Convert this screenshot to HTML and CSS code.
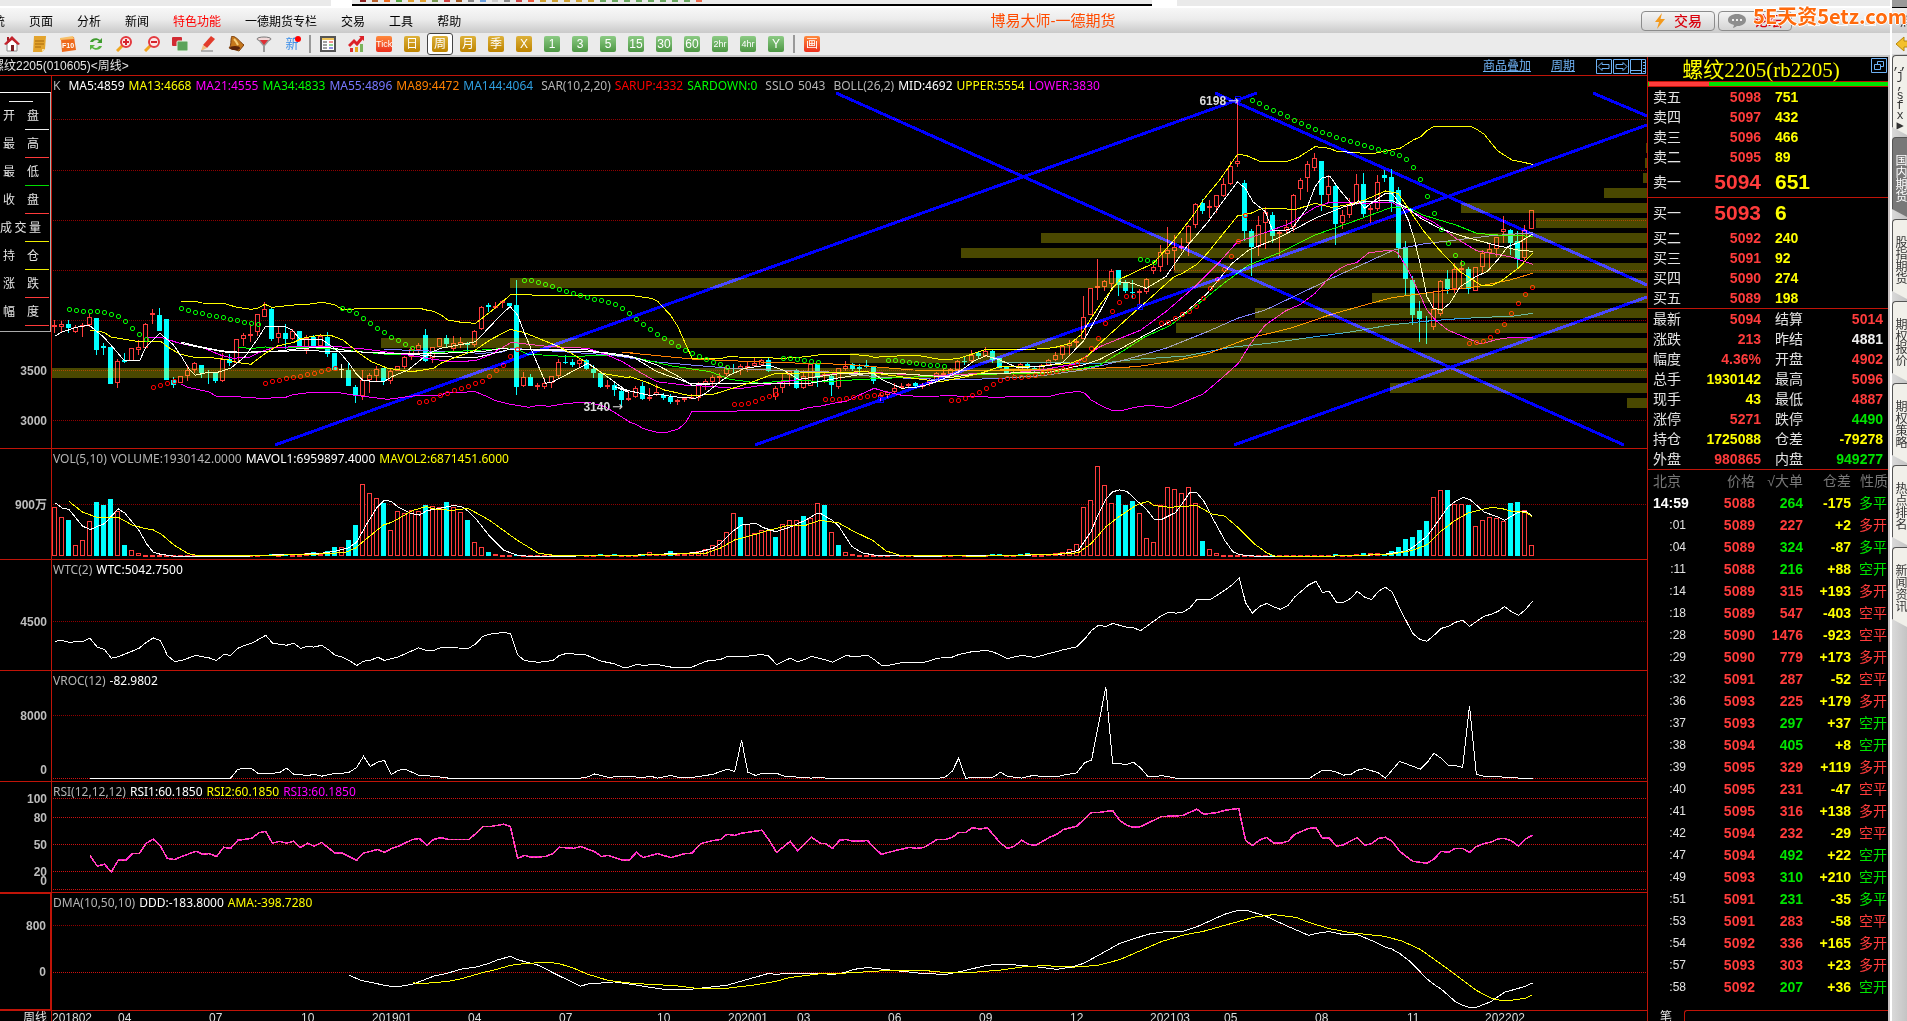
FILE: index.html
```html
<!DOCTYPE html>
<html lang="zh-CN">
<head>
<meta charset="utf-8">
<title>博易大师-一德期货</title>
<link rel="stylesheet" href="styles.css">
</head>
<body>
<div class="app">
  <div class="window">
    <div class="backdrop">
      <div class="backdrop-left"></div>
      <div class="backdrop-peek" id="peek"></div>
      <div class="backdrop-right"></div>
    </div>
    <header class="menubar">
      <nav class="menu">
        <a href="#">系统</a><a href="#">页面</a><a href="#">分析</a><a href="#">新闻</a><a href="#" class="hot">特色功能</a><a href="#">一德期货专栏</a><a href="#">交易</a><a href="#">工具</a><a href="#">帮助</a>
      </nav>
      <h1 class="app-title">博易大师-一德期货</h1>
      <div class="menu-actions">
        <button class="pill"><svg width="12" height="16" viewBox="0 0 12 16"><path d="M8 0 1 9h4L3 16l8-10H6.500z" fill="#f39a1d"/></svg>交易</button>
        <button class="pill"><svg width="18" height="14" viewBox="0 0 18 14"><path d="M9 0c5 0 9 2.500 9 6s-4 6-8 6c-2 0-2 1-5 2l1-3C3 10 0 9 0 6c0-3.500 4-6 9-6z" fill="#8d8d8d"/><path d="M4 5h2v2H4zM8 5h2v2H8zM12 5h2v2h-2z" fill="#eee"/></svg>论坛</button>
      </div>
      <div class="win-buttons"><span></span><span></span><span></span></div>
    </header>

    <div class="toolbar">
      <button class="tool" aria-label="首页"><svg viewBox="0 0 16 16"><path d="M3 8v7h10V8L8 3z" fill="#fff" stroke="#888"/><path d="M8 0 0 8l2 1 6-5 6 5 2-1z" fill="#c4232c"/><path d="M3 1h2v3L3 5z" fill="#a51c25"/><path d="M7 9h3v6H7z" fill="#7c1f22"/></svg></button>
      <button class="tool" aria-label="便笺"><svg viewBox="0 0 16 16"><path d="M2 0h12l-1 13-3 3H1z" fill="#e3a42d"/><path d="M3 5h9M3 8h9M3 11h6" stroke="#a8680e"/><path d="M10 16v-3h3z" fill="#fce09a"/></svg></button>
      <button class="tool" aria-label="F10"><svg viewBox="0 0 16 16"><path d="M1 3 14 1l2 13-14 2z" fill="#ee6a1c"/><path d="M0 2 13 0l1 3L0 4z" fill="#f6c06a"/><text x="8" y="12" text-anchor="middle" class="icon-f10">F10</text></svg></button>
      <button class="tool" aria-label="刷新"><svg viewBox="0 0 16 16"><path d="M2 6c1-4 7-5 10-2l2-2v5H9l2-2C9 3 6 4 5 6z" fill="#3f9b2e"/><path d="M14 10c-1 4-7 5-10 2l-2 2V9h5l-2 2c2 2 5 1 6-1z" fill="#57b440"/></svg></button>
      <button class="tool" aria-label="放大"><svg viewBox="0 0 16 16"><path d="m1 15 6-6" stroke="#f0a51e" stroke-width="3"/><circle cx="10" cy="6" r="5" fill="#fbe9ea" stroke="#e43a3f" stroke-width="2"/><path d="M10 3v6M7 6h6" stroke="#d5232c" stroke-width="2"/></svg></button>
      <button class="tool" aria-label="缩小"><svg viewBox="0 0 16 16"><path d="m1 15 6-6" stroke="#f0a51e" stroke-width="3"/><circle cx="10" cy="6" r="5" fill="#fbe9ea" stroke="#e43a3f" stroke-width="2"/><path d="M7 6h6" stroke="#d5232c" stroke-width="2"/></svg></button>
      <button class="tool" aria-label="叠加"><svg viewBox="0 0 16 16"><rect x="0" y="1" width="10" height="9" rx="1" fill="#d22b33"/><rect x="5" y="5" width="11" height="10" rx="1" fill="#5ba35a" stroke="#e8f3e6"/></svg></button>
      <button class="tool" aria-label="画线"><svg viewBox="0 0 16 16"><path d="m3 9 8-9 4 3-8 9z" fill="#e23b2b"/><path d="m3 9-2 6 6-3z" fill="#f0c080"/><path d="M1 15h12" stroke="#777"/></svg></button>
      <button class="tool" aria-label="预警"><svg viewBox="0 0 16 16"><path d="M4 0c5 1 7 5 12 9l-5 6-10-3C4 9 2 4 4 0z" fill="#c5781d" stroke="#7a3d0c"/><ellipse cx="7" cy="12" rx="5" ry="2" fill="#5b250c"/><path d="M6 3c2 2 3 4 4 6" stroke="#f7ce78" stroke-width="2" fill="none"/></svg></button>
      <button class="tool" aria-label="筛选"><svg viewBox="0 0 16 16"><ellipse cx="8" cy="3" rx="7" ry="2" fill="#f3d9d9" stroke="#777"/><path d="m2 4 5 6v6h2v-6l5-6z" fill="#999"/><path d="m4 4 4 5 4-5z" fill="#de2f35"/></svg></button>
      <button class="tool news">新</button>
      <span class="sep"></span>
      <button class="tool" aria-label="报价"><svg viewBox="0 0 16 16"><path d="M1 1h14v14H1z" fill="#fff" stroke="#555" stroke-width="2"/><path d="M2 3h12" stroke="#eec45a" stroke-width="2"/><path d="M3 6h4M3 9h4M3 12h4" stroke="#444"/><path d="M9 6h4" stroke="#d22"/><path d="M9 9h4" stroke="#2a2"/><path d="M9 12h4" stroke="#22c"/></svg></button>
      <button class="tool" aria-label="走势"><svg viewBox="0 0 16 16"><path d="M2 12h3v4H2z" fill="#d33"/><path d="M7 11h3v5H7z" fill="#e6a91c"/><path d="M12 8h3v8h-3z" fill="#7ab45c"/><path d="m1 10 5-5 3 3 5-6" fill="none" stroke="#dc2127" stroke-width="3"/><path d="M11 0h5v5z" fill="#dc2127"/></svg></button>
      <button class="tool"><span class="chip red narrow">Tick</span></button>
      <button class="tool"><span class="chip gold">日</span></button>
      <button class="tool active"><span class="chip gold">周</span></button>
      <button class="tool"><span class="chip gold">月</span></button>
      <button class="tool"><span class="chip gold">季</span></button>
      <button class="tool"><span class="chip gold">X</span></button>
      <button class="tool"><span class="chip green">1</span></button>
      <button class="tool"><span class="chip green">3</span></button>
      <button class="tool"><span class="chip green">5</span></button>
      <button class="tool"><span class="chip green">15</span></button>
      <button class="tool"><span class="chip green">30</span></button>
      <button class="tool"><span class="chip green">60</span></button>
      <button class="tool"><span class="chip green narrow">2hr</span></button>
      <button class="tool"><span class="chip green narrow">4hr</span></button>
      <button class="tool"><span class="chip green">Y</span></button>
      <span class="sep"></span>
      <button class="tool"><span class="chip red">画</span></button>
    </div>

    <div class="workspace">
      <main class="charts">
        <div class="chart-head">
          <h2>螺纹2205(010605)&lt;周线&gt;</h2>
          <a href="#" class="overlay-link">商品叠加</a>
          <a href="#" class="period-link">周期</a>
          <div class="head-icons">
            <button aria-label="向左"><svg viewBox="0 0 16 15"><path d="M.5.500h15v14H.500z"/><path d="M2 7.500 6 3.500v2h7v4H6v2z"/></svg></button>
            <button aria-label="向右"><svg viewBox="0 0 16 15"><path d="M.5.500h15v14H.500z"/><path d="m14 7.500-4-4v2H3v4h7v2z"/></svg></button>
            <button aria-label="分栏"><svg viewBox="0 0 16 15"><path d="M.5.500h15v14H.500zM11.500 1v13M1 11.500h10"/><path d="M13 3.500h2M13 6.500h2M13 9.500h2M13 12.500h2"/></svg></button>
          </div>
        </div>

        <section class="panel" data-panel="main">
          <div class="axis">
            <div class="databox">
              <i class="val first"></i>
              <div><span>开</span><span>盘</span></div><i class="val w"></i>
              <div><span>最</span><span>高</span></div><i class="val r"></i>
              <div><span>最</span><span>低</span></div><i class="val g"></i>
              <div><span>收</span><span>盘</span></div><i class="val r"></i>
              <div class="wide"><span>成</span><span>交</span><span>量</span></div><i class="val y"></i>
              <div><span>持</span><span>仓</span></div><i class="val y"></i>
              <div><span>涨</span><span>跌</span></div><i class="val r"></i>
              <div><span>幅</span><span>度</span></div><i class="val r"></i>
            </div>
          </div>
          <div class="plot">
            <p class="legend"><span class="k">K</span><b class="white">MA5:4859</b><b class="yellow">MA13:4668</b><b class="magenta">MA21:4555</b><b class="lime">MA34:4833</b><b class="violet">MA55:4896</b><b class="orange">MA89:4472</b><b class="sky">MA144:4064</b><span class="group">SAR(10,2,20)</span><b class="red">SARUP:4332</b><b class="lime">SARDOWN:0</b><span class="group">SSLO</span><span>5043</span><span class="group">BOLL(26,2)</span><b class="white">MID:4692</b><b class="yellow">UPPER:5554</b><b class="magenta">LOWER:3830</b></p>
          </div>
        </section>
        <section class="panel" data-panel="vol">
          <div class="axis"></div>
          <div class="plot"><p class="legend"><span>VOL(5,10)</span><span>VOLUME:1930142.0000</span><b class="white">MAVOL1:6959897.4000</b><b class="yellow">MAVOL2:6871451.6000</b></p></div>
        </section>
        <section class="panel" data-panel="wtc">
          <div class="axis"></div>
          <div class="plot"><p class="legend"><span>WTC(2)</span><b class="white">WTC:5042.7500</b></p></div>
        </section>
        <section class="panel" data-panel="vroc">
          <div class="axis"></div>
          <div class="plot"><p class="legend"><span>VROC(12)</span><b class="white">-82.9802</b></p></div>
        </section>
        <section class="panel" data-panel="rsi">
          <div class="axis"></div>
          <div class="plot"><p class="legend"><span>RSI(12,12,12)</span><b class="white">RSI1:60.1850</b><b class="yellow">RSI2:60.1850</b><b class="magenta">RSI3:60.1850</b></p></div>
        </section>
        <section class="panel selected" data-panel="dma">
          <div class="axis"></div>
          <div class="plot"><p class="legend"><span>DMA(10,50,10)</span><b class="white">DDD:-183.8000</b><b class="yellow">AMA:-398.7280</b></p></div>
        </section>
        <div class="dates"><span class="dates-period">周线</span><div class="dates-track" id="dates"></div></div>
      </main>

      <aside class="quote">
        <div class="quote-title">
          <h2>螺纹2205(rb2205)</h2>
          <button aria-label="还原"><svg viewBox="0 0 16 15"><path d="M.5.500h15v14H.500zM6.500 6V3.500h6v5H10M3.500 6.500h6v5h-6z"/></svg></button>
        </div>
        <div class="ratio"><span></span></div>
        <table class="book" id="asks"></table>
        <table class="book" id="bids"></table>
        <table class="stats" id="stats"></table>
        <table class="ticks">
          <thead><tr><th class="t">北京</th><th>价格</th><th>√大单</th><th>仓差</th><th>性质</th></tr></thead>
          <tbody id="ticks"></tbody>
        </table>
        <div class="quote-tabs"><button>笔</button><div class="quote-tabs-rest"></div></div>
      </aside>
    </div>
  </div>

  <aside class="side">
    <div class="side-top"></div>
    <div class="side-menu">点</div>
    <div class="side-arrow"><svg width="14" height="16" viewBox="0 0 14 16"><path d="m1 8 8-7v4h5v6H9v4z" fill="#f3c02c" stroke="#b8860b"/></svg></div>
    <nav class="side-tabs">
      <button class="small"><span>,,</span><span>j</span><span>,</span><span>s</span><span>f</span><span>x</span><span>▶</span></button>
      <button class="on">国内期货</button>
      <button>股指期货</button>
      <button>期权报价</button>
      <button>期权策略</button>
      <button>热点排名</button>
      <button>新闻资讯</button>
    </nav>
  </aside>
  <div class="watermark">5E天资5etz.com</div>
</div>
<script src="script.js"></script>
</body>
</html>
```
FILE: styles.css
```css
* { box-sizing: border-box; }
body {
  margin: 0;
  background: #000;
  color: #e4e4e4;
  font: 12px/16px "Liberation Sans", "Noto Sans CJK SC", sans-serif;
}
h1, h2, p { margin: 0; font-weight: normal; }
button { border: 0; padding: 0; background: none; color: inherit; font: inherit; }
a { color: inherit; text-decoration: none; }
table { border-collapse: separate; border-spacing: 0; table-layout: fixed; width: 100%; }
td, th { padding: 0; font-weight: normal; white-space: nowrap; }

.app { position: relative; display: flex; height: 100vh; min-height: 800px; overflow: hidden; }
.window { flex: 1; min-width: 0; display: flex; flex-direction: column; border-right: 2px solid #fff; box-sizing: content-box; }

/* strip of the window behind */
.backdrop { display: flex; flex: none; height: 8px; background: #fff; border-bottom: 2px solid #fff; }
.backdrop-left { width: 331px; background: #eaeaea; margin-right: 21px; }
.backdrop-peek { flex: 0 0 800px; display: flex; gap: 6px; padding-left: 8px; background: #ebebeb; border-bottom: 2px solid #000; height: 6px; }
.backdrop-peek i { width: 6px; height: 2px; }
.backdrop-right { flex: 1; margin-left: 25px; background: #eaeaea; }

.menubar {
  display: grid;
  flex: none;
  grid-template-columns: 1fr auto 1fr;
  align-items: center;
  height: 25px;
  background: linear-gradient(#f7f7f7, #ececec 45%, #c9c9c9);
  color: #000;
  overflow: hidden;
}
.menu { display: flex; gap: 24px; margin-left: -19px; padding-top: 2px; white-space: nowrap; }
.hot { color: #f00; }
.app-title { font-size: 15px; color: #ff4a00; padding-left: 216px; }
.menu-actions { display: flex; gap: 3px; justify-content: flex-end; padding-right: 98px; grid-column: 3; grid-row: 1; }
.pill {
  display: flex; align-items: center; justify-content: center; gap: 8px;
  width: 74px; height: 20px;
  border: 1px solid #8c8c8c; border-radius: 4px;
  background: linear-gradient(#f4f4f4, #d4d4d4);
  color: #d8000c; font-size: 14px; font-weight: 500;
}
.win-buttons { display: flex; gap: 16px; justify-content: flex-end; padding-right: 14px; grid-column: 3; grid-row: 1; }
.win-buttons span { width: 12px; height: 10px; border: 1px solid #fafafa; }

.toolbar {
  display: flex; align-items: center;
  height: 24px;
  border-bottom: 2px solid #c8c8c8; background: #ebebeb;
  margin-left: -2px; overflow: hidden; flex: none;
}
.tool { flex: none; width: 28px; height: 22px; display: flex; align-items: center; justify-content: center; position: relative; }
.tool svg { width: 16px; height: 16px; }
.icon-f10 { font: bold 7px "Liberation Sans", sans-serif; fill: #fff; }
.news { color: #3b8ee8; font-size: 13px; }
.news::after { content: ""; position: absolute; right: 5px; top: 3px; width: 6px; height: 6px; border-radius: 50%; background: #f00; }
.sep { flex: none; width: 2px; height: 18px; margin: 0 3px; background: #999; }
.tool.active { border: 1px solid #444; border-radius: 3px; background: #fff; width: 26px; margin: 0 1px; }
.chip { width: 16px; height: 16px; border-radius: 2px; color: #fff; line-height: 16px; text-align: center; }
.gold { background: linear-gradient(#ddb13a, #be8400); }
.green { background: linear-gradient(#8ccb84, #4d9744); }
.red { background: linear-gradient(#ff8a3c, #ec2f1e); }
.narrow { font-family: "Liberation Sans Narrow", "Liberation Sans", sans-serif; font-size: 9px; }

.workspace { flex: 1; min-height: 0; display: grid; grid-template-columns: minmax(0, 1fr) 243px; background: #000; overflow: hidden; }

/* chart column */
.charts {
  display: grid; min-height: 0;
  grid-template-rows: 19px minmax(0, 373fr) repeat(4, minmax(0, 111fr)) minmax(0, 118fr) 10px;
}
.chart-head { display: flex; align-items: center; border-bottom: 1px solid #c01408; overflow: hidden; }
.chart-head h2 { flex: 1; font-size: 12px; margin-left: -8px; white-space: nowrap; }
.chart-head a { color: #6fb2f5; text-decoration: underline; }
.overlay-link { margin-right: 20px; }
.period-link { margin-right: 21px; }
.head-icons { display: flex; gap: 1px; padding-right: 1px; }
.head-icons svg, .quote-title svg { display: block; width: 16px; height: 15px; fill: none; stroke: #6fb2f5; }

.panel { display: grid; grid-template-columns: 51px minmax(0, 1fr); border-bottom: 1px solid #c01408; min-height: 0; }
.axis { position: relative; }
.axis .tick { position: absolute; right: 4px; margin-top: -8px; color: #bdbdbd; font-weight: bold; }
.selected .axis { border: solid #c01408; border-width: 1px 1px 1px 0; }
.plot { position: relative; min-height: 0; border-left: 1px solid #c01408; }
.plot svg { position: absolute; left: 0; top: 0; width: 100%; height: 100%; display: block; }
.plot svg * { vector-effect: non-scaling-stroke; }
.legend {
  position: relative; z-index: 1;
  display: flex; gap: 4px; padding: 2px 0 0 1px;
  font-family: "Noto Sans", "DejaVu Sans Condensed", sans-serif;
  color: #b4b4b4; white-space: nowrap;
}
.legend b { font-weight: normal; }
.legend .k { margin-right: 4px; }
.legend .group { margin-left: 4px; }
.white { color: #fff; } .yellow { color: #ff0; } .magenta { color: #f0f; } .lime { color: #0f0; }
.violet { color: #7878ff; } .orange { color: #ff8000; } .sky { color: #2f9fe0; } .legend .red { color: #f00; background: none; }
.note { position: absolute; transform: translate(-100%, -50%); display: flex; align-items: center; gap: 2px; color: #ddd; font-weight: bold; white-space: nowrap; }
.note::after { content: "→"; font: 13px/16px "DejaVu Sans", sans-serif; }

.databox { margin-top: 16px; height: 240px; border-top: 1px solid #fff; border-right: 1px solid #aaa; border-bottom: 1px solid #aaa; display: flex; flex-direction: column; }
.databox div { display: flex; justify-content: space-between; width: 36px; margin-left: 3px; height: 27px; align-items: center; line-height: 12px; }
.databox div.wide { width: 41px; margin-left: 0; }
.val { flex: none; height: 1px; width: 24px; margin-left: 25px; background: #eee; }
.val.first { margin: 8px 0 0 9px; }
.val.r { background: #ff3a3a; } .val.g { background: #0d0; } .val.y { background: #ee0; }

.dates { display: grid; grid-template-columns: 51px minmax(0, 1fr); overflow: hidden; height: 10px; line-height: 14px; }
.dates-period { text-align: right; padding-right: 4px; }
.dates-track { position: relative; border-left: 1px solid #c01408; height: 14px; }
.dates-track span { position: absolute; top: 0; color: #ddd; }

/* quote column */
.quote { display: flex; flex-direction: column; min-height: 0; border-left: 1px solid #c01408; border-right: 2px solid #c8c0c0; font-size: 14px; }
.quote-title { position: relative; flex: none; height: 24px; text-align: center; }
.quote-title h2 { color: #ff0; font: 21px/26px "Liberation Serif", "Noto Sans CJK SC", serif; padding-right: 14px; }
.quote-title button { position: absolute; right: 1px; top: 1px; }
.ratio { flex: none; height: 6px; border: solid #c01408; border-width: 1px 0; background: #00e400; padding-left: 1px; }
.ratio span { display: block; width: 25%; height: 4px; background: #ff3c3c; }
.book, .stats { flex: none; border-bottom: 1px solid #c01408; }
.book tr, .stats tr { height: 20px; }
.book tr.best { height: 30px; }
.book th, .stats th { text-align: left; padding-left: 5px; width: 40px; line-height: 18px; }
.quote td { font-weight: bold; line-height: 18px; }
.book td:nth-child(2), .stats td:nth-child(2) { width: 73px; text-align: right; }
.book td:nth-child(3) { padding-left: 14px; }
.best td { font-size: 21px; }
.stats th:nth-child(3) { padding-left: 14px; width: 60px; }
.stats td:nth-child(4) { text-align: right; padding-right: 5px; }
.up { color: #ff3c3c; } .down { color: #00e400; } .amt { color: #ff0; } .flat { color: #f0f0f0; }
.ticks { flex: none; }
.ticks tr { height: 22px; }
.ticks th { color: #777; text-align: right; }
.ticks td { text-align: right; }
.ticks th.t { width: 40px; text-align: left; padding-left: 5px; }
.ticks th:nth-child(2) { width: 67px; }
.ticks th:nth-child(3), .ticks th:nth-child(4) { width: 48px; }
.ticks .sec { font-weight: normal; font-size: 12px; padding-right: 2px; }
.ticks .clock { text-align: left; padding-left: 5px; color: #fff; }
.ticks td:last-child { font-weight: normal; padding-right: 1px; }
.quote-tabs { margin-top: auto; flex: none; display: flex; height: 11px; overflow: hidden; font-size: 12px; }
.quote-tabs button { width: 36px; line-height: 14px; height: 14px; }
.quote-tabs-rest { flex: 1; height: 16px; border: solid #c01408; border-width: 1px 0 0 1px; border-top-left-radius: 3px; }

/* right tab strip */
.side { width: 15px; flex: none; background: linear-gradient(90deg, #d9d9d9, #c4c4c4); overflow: hidden; color: #222; }
.side-top { height: 8px; background: #999; border-bottom: 1px solid #000; }
.side-menu { height: 25px; padding: 6px 0 0 8px; background: linear-gradient(#f0f0f0, #c9c9c9); }
.side-arrow { height: 21px; padding: 3px 0 0 3px; background: #ebebeb; }
.side-tabs { display: flex; flex-direction: column; gap: 2px; padding-top: 1px; }
.side-tabs button {
  height: 80px; width: 15px;
  border-left: 1px solid #555; border-top: 1px solid #555; border-top-left-radius: 4px;
  background: #f1f0ea; color: #333;
  writing-mode: vertical-rl; line-height: 14px; text-align: center;
  clip-path: polygon(0 0, 100% 0, 100% 100%, 0 72px);
}
.side-tabs button.on { background: #787878; color: #fff; }
.side-tabs button.small { writing-mode: horizontal-tb; display: flex; flex-direction: column; justify-content: center; align-items: center; line-height: 10px; font-family: "Liberation Mono", monospace; }

.watermark {
  position: absolute; right: 0; top: 1px;
  color: #ff6a0c; font: bold 20px/30px "Noto Sans CJK SC", sans-serif;
  text-shadow: 1px 0 #fff, -1px 0 #fff, 0 1px #fff, 0 -1px #fff;
}
```
FILE: script.js
```js
const NS = 'http://www.w3.org/2000/svg';

// Unit systems of the stored series: origin and units per pixel on each axis.
const FRAMES = {
  A: [0, 2.45, 80, 3],
  B: [500, 2.6133, 240, 3],
  C: [1000, 2.4123, 80, 3],
  D: [0, 1.9122, 440, 2.7034],
  E: [820, 1.8892, 440, 2.7034]
};
const barX = i => 54.5 + 7 * i;

function series(parts) {
  const out = [];
  for (const [frame, text] of Object.entries(parts)) {
    const [x0, sx, y0, sy] = FRAMES[frame];
    const n = text.trim().split(/[\s,]+/).map(Number);
    for (let i = 0; i < n.length; i += 2) {
      out.push((x0 + n[i] / sx).toFixed(1) + ',' + (y0 + n[i + 1] / sy).toFixed(1));
    }
  }
  return out.join(' ');
}

function el(parent, name, attrs) {
  const node = document.createElementNS(NS, name);
  for (const key in attrs) node.setAttribute(key, attrs[key]);
  parent.appendChild(node);
  return node;
}

const RED = '#ff3c3c', CYAN = '#00ffff';
const PANELS = {
  main: { y: 76, h: 372, grid: [119.5, 170.5, 220.5, 270.5, 320.5, 370.5, 420.5], ticks: [['3500', 370.5], ['3000', 420.5]] },
  vol: { y: 449, h: 110, grid: [504.5], ticks: [['900万', 504.5]] },
  wtc: { y: 560, h: 110, grid: [621.5], ticks: [['4500', 621.5]] },
  vroc: { y: 671, h: 110, grid: [715.5], bright: [778.5], ticks: [['8000', 715.5], ['0', 769.5]] },
  rsi: { y: 782, h: 110, bright: [798.5, 817.5, 844.5, 871.5, 889.5], ticks: [['100', 798.5], ['80', 817.5], ['50', 844.5], ['20', 871.5], ['0', 880.5]] },
  dma: { y: 893, h: 117, grid: [925.5], bright: [972.5], ticks: [['800', 925.5], ['0', 972.5]] }
};

const svgs = {};
for (const [name, p] of Object.entries(PANELS)) {
  const root = document.querySelector(`[data-panel="${name}"]`);
  const plot = root.querySelector('.plot');
  const svg = el(plot, 'svg', { viewBox: `52 ${p.y} 1595 ${p.h}`, preserveAspectRatio: 'none', 'shape-rendering': 'crispEdges' });
  svgs[name] = svg;
  for (const [key, color] of [['grid', '#900000'], ['bright', '#d01010']]) {
    for (const y of p[key] || []) el(svg, 'path', { d: `M53 ${y}H1647`, stroke: color, 'stroke-dasharray': '1 1' });
  }
  for (const [text, y] of p.ticks) {
    const span = document.createElement('span');
    span.className = 'tick';
    span.textContent = text;
    span.style.top = ((y - p.y) / p.h * 100) + '%';
    root.querySelector('.axis').appendChild(span);
  }
}
const line = (panel, color, parts, extra) =>
  el(svgs[panel], 'polyline', { points: series(parts), fill: 'none', stroke: color, ...extra });

function box(svg, i, type, y1, y2) {
  const x = barX(i) - 2.5;
  if (type === 'C') el(svg, 'rect', { x, y: y1, width: 5, height: Math.max(1, y2 - y1), fill: CYAN });
  else el(svg, 'rect', { x: x + 0.5, y: y1 + 0.5, width: 4, height: Math.max(0.5, y2 - y1 - 1), fill: '#000', stroke: RED });
}

// Candles: type, body top, body bottom, high, low.
const CANDLES = `R735,740,720,760 R732,740,723,755 C732,745,720,758 R740,755,735,760 R735,740,730,770 R711,735,700,742 C714,810,714,825 C797,803,790,825 C801,912,801,912 R843,908,838,923 C841,846,820,850 R805,843,805,843 R802,809,780,825 R733,805,730,808 R700,706,687,733 C705,753,684,753 C717,900,717,900 C900,915,890,924 R889,910,889,910 R870,889,855,903 R850,870,845,880 C856,880,856,893 C876,880,870,911 C878,903,878,910 R838,902,820,905 C838,850,822,858 R778,850,778,850 R766,778,760,798 R762,768,732,787 R703,757,703,767
R688,710,667,712 C687,777,682,783 R759,775,741,789 C759,777,732,806 R754,777,748,780 C753,808,753,808 R775,810,765,822 C772,799,765,802 R769,799,765,803 C771,822,757,832 C819,870,819,870 W868,870,852,893 C870,917,849,917 C920,945,914,969 R900,947,870,960 R885,900,880,938 R867,887,857,903 C864,903,864,915 R873,903,868,912 R858,873,858,873 R832,860,829,866 R807,832,805,840 R795,810,789,825 C765,843,747,846 R800,835,800,850 R775,800,775,800 C773,792,765,803 R790,808,768,815 R786,795,770,805 C790,794,785,823
R753,795,750,800 R682,748,677,750 C676,682,670,695 R678,682,665,687 R664,669,660,685 C670,678,668,685 C675,920,600,945 R892,917,875,922 C890,918,882,918 R915,918,908,930 R908,922,893,927 R888,910,888,923 R845,888,838,893 C845,849,826,853 C846,854,838,860 R840,852,834,862 C840,867,837,870 C868,880,855,895 C878,920,875,925 R915,922,900,927 C915,930,910,947 C934,960,925,982 R955,960,930,963 R923,952,918,955 C917,957,906,960 R952,957,925,962 R937,945,912,948 C946,953,940,960 C952,966,942,973 R960,965,957,974
R954,959,950,966 R952,955,942,956 R914,954,907,962 R904,913,898,930 R892,905,885,920 R888,892,880,910 R865,883,855,888 C863,868,852,883 R859,868,852,886 R857,861,846,875 R850,858,835,861 R840,854,837,858 C840,873,832,875 R924,952,917,960 R902,925,882,938 R873,885,870,918 C870,924,867,927 R888,925,870,927 R852,917,852,917 C850,893,850,922 R882,888,878,910 C888,914,884,948 R865,922,863,927 R859,866,843,874 C853,867,850,873 C860,866,853,880 C855,861,840,863 C861,903,858,912 R945,955,938,963 R935,946,932,955
R925,935,910,940 R917,923,910,928 R911,917,908,921 C909,917,906,920 R915,918,910,928 R899,910,895,918 R880,900,877,905 R879,883,868,888 R867,882,863,885 R844,870,840,873 C842,845,832,855 R825,842,810,846 C819,829,814,838 R814,827,800,830 C813,841,810,850 C835,865,835,865 C860,883,860,883 R875,883,870,885 R852,872,848,876 C852,865,850,873 C865,868,860,877 R855,873,852,875 R840,855,838,858 R825,840,815,842 R799,825,797,837 R788,798,780,825 R782,786,775,800 R712,776,648,778 R625,706,625,706 R619,625,538,660
R603,620,600,634 R574,612,567,627 C570,615,570,648 C608,632,600,640 C636,640,600,656 R633,638,627,672 R598,635,594,641 R562,574,555,582 R517,562,495,575 R511,523,442,555 R502,512,465,570 R497,501,474,513 R439,490,435,528 R373,436,370,445 C370,393,358,402 R379,385,360,414 R346,382,346,398 R313,349,294,351 R259,313,244,316 R244,253,60,260 C309,453,300,484 C453,500,448,588 R436,502,408,528 R397,430,380,508 C405,467,396,488 R455,458,450,528 R442,454,420,460 R346,442,342,455 R301,328,294,360 R253,295,243,335
R235,265,219,272 C243,345,243,392 R319,344,286,367 C318,432,315,495 R405,430,390,447 R373,404,354,413 R313,370,282,376 C312,402,279,415 R385,391,375,430 R307,388,286,393 C285,293,270,305 C291,368,267,397 C330,504,320,535 C502,597,483,646 C600,704,588,735 C693,717,663,786 C724,727,708,792 R687,740,637,750 R604,703,600,708 C597,626,570,642 R568,626,550,640 R565,571,540,627 C566,628,561,642 R562,632,562,632 R520,562,510,582 R508,520,493,567 R472,506,470,532 R448,457,408,490 C450,488,447,525 C484,538,453,563 R450,535,436,540 R391,448,391,448`;
const priceY = v => 80 + Math.round(v / 3);
CANDLES.split(/\s+/).forEach((item, i) => {
  const type = item[0];
  const [top, bottom, high, low] = item.slice(1).split(',').map(v => priceY(+v));
  const color = type === 'C' ? CYAN : type === 'W' ? '#fff' : RED;
  el(svgs.main, 'path', { d: `M${barX(i)} ${high}V${low}`, stroke: color });
  if (type === 'W') el(svgs.main, 'path', { d: `M${barX(i) - 2.5} ${top + 0.5}h5`, stroke: color });
  else box(svgs.main, i, type, top, bottom);
});

// Moving averages and Bollinger bands.
line('main', '#2f9fe0', { B: '1305,367 1568,370', C: '241,850 330,838 450,828 550,803 660,788 760,770 850,755 940,735 1040,722 1120,715 1240,708 1285,700' });
line('main', '#ff8000', { A: '1523,817 1550,818', B: '320,337 502,357 700,367 900,373 1080,390 1300,392 1440,390', C: '0,870 200,867 330,860 420,843 500,822 600,775 700,745 800,703 880,675 945,653 1050,635 1150,620 1230,600 1285,580' });
line('main', '#8080ff', { A: '940,808 1050,813 1180,820 1230,816', B: '30,325 290,345 400,365 500,375 600,385 750,392 850,395 1000,412 1200,420 1300,415', C: '0,895 100,887 200,870 300,840 400,805 500,755 573,715 640,690 720,643 800,595 880,550 950,510 1020,492 1100,480 1180,468 1285,458' });
line('main', '#00ff00', { A: '582,803 620,805 650,801 760,803 830,808 880,815 940,822 1000,822 1060,818 1180,810 1225,806', B: '45,328 70,342 180,350 300,344 350,352 450,378 550,395 600,418 680,430 760,420 850,425 950,418 1100,410 1200,405 1300,402', C: '100,880 200,865 241,855 300,810 350,770 410,737 470,680 540,610 600,555 680,515 760,465 840,430 945,382 985,383 1020,405 1100,435 1150,460 1200,465 1285,469' });
line('main', '#ff00ff', { A: '358,773 392,771 440,790 500,805 540,825 570,835 610,832 640,815 670,803 720,800 830,800 900,808 960,818 1000,825 1060,838 1110,845 1165,842 1200,825', B: '30,307 130,320 230,325 280,345 320,365 370,400 410,425 480,435 560,440 625,446 720,430 800,415 880,400 950,395 1050,403 1150,408 1250,400', C: '0,882 100,870 180,852 241,800 270,785 340,750 400,695 470,620 530,545 573,485 600,475 650,453 700,430 760,382 795,367 880,370 945,367 985,390 1050,430 1100,475 1150,512 1230,530 1285,553' });
line('main', '#ffffff', { A: '443,790 500,805 560,818 640,815 740,812 870,815 1000,822 1080,830 1165,833 1250,808 1440,815 1500,820 1550,830', B: '410,395 500,431 700,431' });
line('main', '#ffffff', { A: '443,786 480,797 540,812 600,818 680,813 740,805 800,802 870,815 940,820 1000,822 1080,820 1180,815 1225,806', B: '40,328 230,330 300,345 360,355 410,375 460,405 502,436 550,432 700,431 800,432 880,415 960,400 1060,402 1180,412 1260,400', C: '0,880 120,876 200,855 241,838 300,800 350,765 440,705 500,640 560,550 600,510 670,475 760,415 830,380 880,365 945,361 985,385 1015,415 1060,445 1120,470 1200,497 1250,510 1285,514' });
line('main', '#ffff00', { A: '220,750 255,757 272,771 305,778 330,783 395,785 410,800 440,822 475,832 520,833 560,840 585,848 615,853 650,820 680,798 720,787 740,775 785,765 810,766 840,780 880,820 910,845 950,865 1010,875 1062,865 1080,850 1110,835 1165,810 1200,780 1250,748 1285,758 1370,800 1400,820 1440,850 1475,880 1540,893', B: '340,410 380,425 430,450 500,468 560,462 650,430 720,400 850,398 960,395 1000,403 1060,412 1150,425 1220,410 1269,395', C: '0,860 100,858 170,850 210,830 241,790 330,690 420,590 440,580 475,553 500,520 573,408 610,398 625,388 640,385 680,385 710,390 760,370 800,382 840,374 880,360 930,333 960,340 985,385 1020,450 1060,510 1110,575 1160,615 1190,615 1210,602 1250,565 1285,520' });
line('main', '#ffffff', { A: '135,768 150,757 168,750 185,742 219,736 236,753 253,770 270,793 305,842 342,842 358,800 375,780 392,760 425,795 445,830 462,865 478,886 512,876 530,878 565,865 600,830 632,775 650,740 700,740 716,750 735,777 790,780 820,805 838,825 855,850 872,880 890,902 940,905 960,890 1000,870 1040,830 1060,815 1080,805 1110,798 1165,785 1200,740 1235,695 1250,680 1268,705 1285,760 1337,910 1355,905 1440,850 1471,875 1510,910 1540,937', B: '300,440 340,453 390,466 420,463 450,470 510,475 535,462 570,430 600,405 640,385 700,375 740,390 780,418 830,410 880,402 975,400 1000,420 1050,445 1100,440 1141,425 1200,395 1240,362 1270,347', C: '0,840 40,862 100,860 150,848 200,785 241,695 270,625 285,605 320,610 353,625 400,590 450,500 500,428 540,360 573,306 592,325 610,365 640,395 657,450 690,450 705,445 740,385 760,320 775,295 795,288 820,330 850,375 865,362 880,385 900,365 930,340 945,340 965,370 985,420 1000,480 1015,560 1030,650 1045,685 1065,690 1085,670 1110,620 1150,588 1175,575 1200,540 1225,500 1255,485 1285,462' });
line('main', '#ffff00', { A: '444,664 480,664 495,669 548,670 580,682 615,688 632,684 649,673 666,682 720,675 760,672 790,667 820,674 838,688 860,689 875,685 1028,685 1045,690 1062,694 1080,704 1097,720 1130,727 1165,730 1200,697', B: '27,165 45,163 100,166 340,166 395,175 412,184 445,225 465,260 490,325 502,355 575,357 595,350 740,355 800,350 830,345 905,342 960,347 978,352 1070,346 1100,348 1160,360 1200,355 1235,342 1269,328', C: '0,808 90,807 130,803 170,790 195,765 220,715 241,675 290,597 370,550 420,480 470,400 490,360 530,300 573,223 593,226 625,243 695,243 720,232 760,200 795,205 812,214 860,218 895,222 935,212 965,205 997,180 1015,170 1030,152 1047,139 1134,139 1150,148 1168,163 1200,212 1235,240 1285,253' });
line('main', '#ff00ff', { A: '443,912 460,922 513,936 530,949 580,949 600,953 650,955 700,952 718,944 755,938 830,938 860,944 950,958 1030,945 1080,945 1095,938 1165,935 1190,948 1215,962', B: '27,493 75,502 100,496 130,499 175,490 230,487 275,500 310,525 340,547 355,553 375,566 410,577 435,577 465,568 485,548 502,514 610,514 640,511 780,511 810,502 835,499 875,489 905,484 935,467 978,445 1000,453 1050,466 1090,469 1150,468 1180,466 1200,469', C: '0,952 40,949 120,949 150,940 190,934 205,940 220,960 245,978 270,991 300,990 320,983 360,976 410,983 440,968 490,942 530,900 575,850 605,790 640,735 690,692 725,673 760,640 800,585 815,570 835,556 860,548 890,518 930,512 950,512 960,520 980,560 1000,610 1030,690 1050,720 1080,750 1115,768 1160,792 1200,778 1235,772 1285,773' });

// Parabolic SAR: first bar, colour, then one value per bar.
const SAR = [
  [2, 'g', '688 690 693 694 694 697 703 709 724 745 763 778'], [14, 'r', '922 916 908 902'],
  [18, 'g', '685 691 697 700 706 709 712 717 721 727 730 733'], [30, 'r', '910 904 901 895 892 887 883 878 874 868 865'],
  [41, 'g', '685 691 700 715 730 745 757 772 780 793 804'], [52, 'r', '967 964 957 946 940 931 925 917 910 904 889 871 854 829 808'],
  [67, 'g', '601 601 607 613 619 628 634 640 646 652 658 661 667 673 685 700 718 733 748 763 775 787 799 811 820 829 838 847 853 861'],
  [97, 'r', '973 973 970 964 955 949 943'], [104, 'g', '835 835 837 841 844 847'], [110, 'r', '958 958 956 954 952 950 948 946 943'],
  [119, 'g', '841 841 844 847 850 852 854 856 859'],
  [128, 'r', '961 959 954 946 937 925 913 901 895 891 890 889 884 879 876 872 868 862 850 838 805 775 730 694 667 647 647'],
  [155, 'g', '538 541 547'], [158, 'r', '730 727 715 703 694 679 655 625 598 568 529 484 406'],
  [171, 'g', '61 70 82 91 100 109 121 130 139 148 157 163 172 178 184 190 196 202 208 214 220 226 238 262 298 349 400 448 490 526 550'],
  [202, 'r', '790 787 782 772 754 733 700 670 643 622']
];
for (const [start, kind, text] of SAR) {
  text.split(' ').forEach((v, k) => el(svgs.main, 'rect', {
    x: barX(start + k) - 1, y: 78.5 + Math.round(v / 3), width: 4, height: 4, rx: 1.5, fill: 'none',
    stroke: kind === 'g' ? '#00ff00' : '#ff0000', 'shape-rendering': 'auto'
  }));
}

// Price profile: top, left edge.
const PROFILE = [[143, 1646], [158, 1645], [173, 1643], [188, 1604], [203, 1461], [218, 1536], [233, 1041], [248, 961], [263, 1174], [278, 510], [293, 1372], [308, 1255], [323, 1176], [338, 381], [353, 850], [368, 52], [383, 1390], [398, 1627]];
for (const [y, x] of PROFILE) el(svgs.main, 'rect', { x, y, width: 1647 - x, height: 10, fill: 'rgb(255,248,0)', 'fill-opacity': 0.29 });

// Trend channels.
const trend = el(svgs.main, 'g', { stroke: '#0000ff', 'stroke-width': 3, fill: 'none', style: 'mix-blend-mode:lighten' });
for (const d of ['M275 445 1257 93', 'M755 445 1647 125', 'M1234 445 1647 297', 'M836 93 1624 445', 'M1215 93 1647 285', 'M1593 93 1647 116']) {
  el(trend, 'path', { d });
}
for (const [x, y] of [[1238, 99], [1140, 307], [881, 400]]) el(svgs.main, 'rect', { x: x - 2.5, y: y - 2.5, width: 5, height: 5, fill: 'none', stroke: '#0000ff' });

for (const [text, x, y] of [['6198', 1239, 100.5], ['3140', 623, 406.5]]) {
  const note = document.createElement('span');
  note.className = 'note';
  note.textContent = text;
  note.style.left = ((x - 52) / 1595 * 100) + '%';
  note.style.top = ((y - 76) / 372 * 100) + '%';
  svgs.main.parentNode.appendChild(note);
}

// Volume: first bar, then bar tops.
const VOLUME = [
  [0, 'R180 R209 C216 R285 R271 R220 C168 C176 C160 R193 C284 R298 R306'],
  [31, 'C309 R310 C307 R311 R311 R305 C304 R307 C300 C290 R288 C270 C230 R120 R142 R158 C170 R244 R193 R197 R188 R193 C176 R178 R182 C168 R181 R195 C216 R277 R290 C303 R309'],
  [78, 'C309 R311 C309 R311 R311 R311 C307 R304 R309 R307 C301 R307 R307 R304 R300 R296 R285 R270 R250 R198 C208 R226 R251 R244 R244 C261 R228 R217 R217 C205 R212 R171 C176 R250 C284 R304 R307'],
  [134, 'C309 C309 R311 R311 C309 C306 R310 R310 R307 R306 R304 R296 R282 R182 R163 R69 R123 R169 C150 C176 C165 R196 R266 R277 R175 R128 R132 R142 R128 R171 C274 R296 R306'],
  [183, 'C308 R311 R311 R309 C306 R306 R306 C309 C300 C288 C268 C262 C243 C220 R155 R136 C136 R174 R174 C176 R233 R217 R207 R210 R220 C170 C168 R188 R285']
];
const volume = Array.from({ length: 212 }, (_, i) => (i % 9 === 3 ? 'C311' : 'R311'));
for (const [start, text] of VOLUME) text.split(' ').forEach((v, k) => { volume[start + k] = v; });
volume.forEach((v, i) => box(svgs.vol, i, v[0], Math.round(440 + v.slice(1) / 2.7034), 556));
line('vol', '#ffffff', { D: '106,170 119,184 132,188 158,233 173,242 185,234 200,226 226,186 239,198 266,245 280,280 293,303 307,309 333,314 470,314 520,311 610,307 640,301 666,292 682,276 700,230 720,184 735,163 748,166 762,182 785,198 802,203 816,191 840,185 868,177 882,180 896,193 910,213 935,258 963,298 990,312 1020,315 1200,312 1330,305 1363,293 1378,280 1400,248 1418,230 1445,225 1460,237 1483,248 1510,236 1540,217 1563,198', E: '0,198 22,216 35,232 60,288 80,305 105,312 200,314 450,310 488,299 512,248 526,200 540,160 553,140 566,135 580,139 600,166 617,188 631,214 645,215 672,196 685,170 699,141 712,143 725,165 740,207 752,238 765,272 780,302 792,310 830,315 960,314 1060,310 1107,301 1120,290 1147,260 1160,235 1187,180 1200,166 1215,155 1228,161 1255,195 1280,208 1293,217 1320,195 1334,193 1345,205' });
line('vol', '#ffff00', { D: '132,166 158,195 185,209 226,209 253,230 280,240 293,243 307,253 333,284 360,307 380,313 480,313 600,309 660,304 680,292 700,268 733,230 750,222 790,190 815,180 835,188 865,190 895,185 935,216 990,272 1030,306 1060,312 1200,312 1350,306 1378,292 1405,270 1445,255 1470,244 1510,230 1540,231', E: '0,217 35,224 60,244 100,272 125,300 150,311 300,314 440,309 488,305 512,280 540,235 566,206 600,174 620,166 631,177 660,182 712,177 740,200 765,206 790,237 820,280 845,306 860,314 960,314 1080,309 1120,298 1147,283 1170,250 1200,217 1225,197 1250,188 1270,182 1290,186 1310,194 1334,195 1345,207' });

line('wtc', '#ffffff', { D: '105,544 119,542 133,547 159,544 172,536 186,560 200,567 213,590 226,586 266,563 280,547 293,535 307,542 320,582 334,599 347,596 375,582 390,587 400,589 414,596 428,580 441,582 455,563 468,555 481,550 508,528 521,549 548,555 561,549 575,563 588,558 600,560 615,555 628,567 641,582 655,587 668,596 682,610 695,598 708,596 722,587 735,596 762,586 800,562 816,569 829,569 843,561 896,563 910,551 923,531 937,525 963,520 976,523 990,581 1003,596 1030,601 1057,596 1070,582 1084,577 1120,581 1150,598 1175,605 1190,614 1203,614 1217,607 1230,609 1257,607 1283,614 1323,614 1350,598 1378,593 1390,586 1418,586 1457,580 1470,584 1485,607 1511,590 1525,599 1540,593 1552,585 1568,591', E: '10,594 24,601 50,582 62,586 90,582 104,595 116,609 130,609 158,601 197,601 223,590 250,587 262,580 288,572 316,569 329,574 354,591 381,582 405,588 460,567 485,559 500,538 513,515 526,501 540,504 553,496 580,506 592,508 606,515 645,475 658,466 672,468 685,466 699,454 712,431 738,431 765,406 778,392 792,372 804,440 817,468 830,450 844,442 857,451 870,458 884,448 897,424 923,392 937,382 949,412 962,409 976,439 989,439 1003,428 1015,409 1029,425 1042,431 1055,409 1068,398 1081,411 1095,455 1120,523 1134,540 1147,544 1160,528 1174,509 1187,504 1200,493 1214,487 1227,504 1254,477 1268,471 1281,463 1293,450 1306,464 1320,474 1333,458 1346,436' });

line('vroc', '#ffffff', { D: '172,914 441,914 455,890 468,888 481,888 493,901 521,901 535,899 548,887 561,903 588,907 601,904 615,909 641,901 655,901 668,898 682,885 695,855 708,882 722,871 735,866 748,904 762,893 775,890 802,907 829,909 857,914 1110,914 1123,911 1137,903 1163,912 1190,909 1230,912 1244,909 1257,914 1283,907 1297,912 1323,912 1363,904 1390,890 1405,896 1418,811 1430,898 1445,907 1457,901 1485,901 1500,909 1552,914 1568,911', E: '10,914 225,914 237,911 250,895 262,860 275,914 328,911 341,898 354,909 381,914 405,906 420,911 434,909 447,911 460,906 485,900 500,872 513,866 540,668 553,874 580,877 592,871 606,887 619,909 631,911 645,907 672,914 925,914 949,893 962,893 976,898 989,906 1003,904 1015,893 1029,888 1055,900 1068,914 1095,869 1120,882 1134,890 1147,872 1160,847 1174,861 1187,880 1200,880 1214,885 1227,719 1240,904 1254,909 1306,912 1320,914 1346,914' });

const RSI = { D: '172,1123 186,1152 200,1147 213,1168 226,1136 241,1136 253,1118 266,1118 280,1090 293,1079 307,1098 320,1131 334,1134 347,1126 375,1112 388,1120 400,1118 414,1126 428,1101 441,1104 455,1082 481,1077 495,1062 508,1058 521,1090 535,1085 548,1090 561,1085 575,1102 588,1090 601,1098 615,1088 641,1117 655,1117 682,1136 695,1117 722,1107 735,1115 748,1105 762,1098 789,1080 802,1077 816,1096 829,1080 843,1075 857,1080 896,1080 910,1064 923,1045 937,1045 963,1039 976,1045 990,1131 1003,1123 1017,1128 1043,1126 1057,1118 1070,1101 1097,1104 1110,1099 1137,1113 1150,1126 1163,1123 1190,1136 1203,1136 1217,1115 1230,1129 1257,1118 1283,1129 1310,1118 1323,1117 1340,1091 1363,1083 1378,1080 1390,1066 1405,1069 1418,1063 1457,1055 1470,1080 1485,1115 1511,1085 1525,1110 1552,1074 1568,1090', E: '10,1091 24,1104 37,1082 50,1080 62,1085 90,1083 104,1104 116,1120 145,1109 170,1101 183,1104 197,1101 221,1080 237,1080 250,1074 262,1061 275,1061 288,1048 302,1052 316,1048 341,1090 354,1104 367,1098 381,1082 394,1093 407,1096 434,1074 447,1066 460,1053 485,1044 513,1007 526,1007 553,1002 566,1028 580,1042 592,1047 606,1045 645,1018 685,1015 712,998 725,1012 750,1007 765,1001 791,996 804,1083 817,1096 830,1082 844,1074 857,1090 870,1090 884,1085 897,1066 923,1050 937,1048 949,1076 962,1076 976,1098 989,1094 1015,1075 1029,1096 1042,1091 1055,1077 1068,1074 1081,1085 1095,1112 1120,1139 1147,1144 1160,1133 1174,1112 1187,1115 1200,1104 1214,1104 1227,1115 1240,1099 1254,1091 1268,1087 1281,1078 1293,1077 1306,1083 1320,1098 1333,1079 1346,1068' };
line('rsi', '#ff20d0', RSI, { 'stroke-width': 1.6 });
line('rsi', '#ff8090', RSI, { 'stroke-dasharray': '2 2' });

line('dma', '#ffffff', { D: '668,1447 690,1461 735,1474 748,1477 765,1477 790,1471 830,1449 855,1442 880,1431 910,1425 935,1415 950,1406 976,1396 990,1405 1030,1420 1060,1442 1110,1477 1123,1471 1175,1465 1210,1472 1240,1479 1270,1485 1320,1485 1390,1474 1470,1442 1485,1445 1500,1442 1568,1442', E: '25,1445 45,1440 65,1431 90,1426 120,1431 185,1441 237,1445 275,1434 315,1420 345,1417 380,1420 420,1426 447,1431 475,1425 498,1415 540,1382 566,1361 620,1336 658,1328 687,1328 710,1317 765,1282 791,1271 804,1271 840,1286 884,1315 923,1339 937,1334 962,1329 985,1336 1015,1337 1050,1358 1068,1371 1080,1376 1095,1388 1115,1410 1147,1457 1160,1472 1174,1485 1200,1518 1214,1528 1227,1534 1240,1534 1268,1518 1293,1493 1333,1477 1346,1468' });
line('dma', '#ffff00', { D: '789,1467 802,1470 855,1464 880,1457 920,1441 950,1431 976,1420 1005,1415 1050,1412 1070,1416 1097,1428 1123,1444 1163,1461 1210,1469 1290,1475 1330,1482 1390,1482 1440,1474 1485,1463 1510,1453 1568,1443', E: '50,1441 130,1434 195,1434 240,1440 290,1439 340,1433 380,1425 420,1421 480,1425 525,1420 566,1405 645,1356 685,1339 725,1328 765,1312 820,1290 857,1283 900,1291 923,1304 962,1321 1003,1332 1068,1342 1100,1355 1134,1377 1187,1431 1240,1488 1268,1509 1285,1515 1305,1515 1333,1509 1346,1500' });

// Date axis.
const DATES = [['201802', 52], ['04', 118], ['07', 209], ['10', 301], ['201901', 372], ['04', 468], ['07', 559], ['10', 657], ['202001', 728], ['03', 797], ['06', 888], ['09', 979], ['12', 1070], ['202103', 1150], ['05', 1224], ['08', 1315], ['11', 1407], ['202202', 1485]];
for (const [text, x] of DATES) {
  const span = document.createElement('span');
  span.textContent = text;
  span.style.left = ((x - 52) / 1595 * 100) + '%';
  document.getElementById('dates').appendChild(span);
}

// Quote tables.
const fill = (id, rows) => { document.getElementById(id).innerHTML = rows.join(''); };
const book = ([name, price, amount, best]) =>
  `<tr class="${best ? 'best' : ''}"><th scope="row">${name}</th><td class="up">${price}</td><td class="amt">${amount}</td></tr>`;
fill('asks', [['卖五', 5098, 751], ['卖四', 5097, 432], ['卖三', 5096, 466], ['卖二', 5095, 89], ['卖一', 5094, 651, 1]].map(book));
fill('bids', [['买一', 5093, 6, 1], ['买二', 5092, 240], ['买三', 5091, 92], ['买四', 5090, 274], ['买五', 5089, 198]].map(book));
fill('stats', [
  ['最新', '5094', 'up', '结算', '5014', 'up'], ['涨跌', '213', 'up', '昨结', '4881', 'flat'],
  ['幅度', '4.36%', 'up', '开盘', '4902', 'up'], ['总手', '1930142', 'amt', '最高', '5096', 'up'],
  ['现手', '43', 'amt', '最低', '4887', 'up'], ['涨停', '5271', 'up', '跌停', '4490', 'down'],
  ['持仓', '1725088', 'amt', '仓差', '-79278', 'amt'], ['外盘', '980865', 'up', '内盘', '949277', 'down']
].map(r => `<tr><th scope="row">${r[0]}</th><td class="${r[2]}">${r[1]}</td><th scope="row">${r[3]}</th><td class="${r[5]}">${r[4]}</td></tr>`));

const TICKS = `14:59 5088 264 -175 多平 g|:01 5089 227 +2 多开 r|:04 5089 324 -87 多平 g|:11 5088 216 +88 空开 g|:14 5089 315 +193 多开 r|:18 5089 547 -403 空平 r|:28 5090 1476 -923 空平 r|:29 5090 779 +173 多开 r|:32 5091 287 -52 空平 r|:36 5093 225 +179 多开 r|:37 5093 297 +37 空开 g|:38 5094 405 +8 空开 g|:39 5095 329 +119 多开 r|:40 5095 231 -47 空平 r|:41 5095 316 +138 多开 r|:42 5094 232 -29 空平 r|:47 5094 492 +22 空开 g|:49 5093 310 +210 空开 g|:51 5091 231 -35 多平 g|:53 5091 283 -58 空平 r|:54 5092 336 +165 多开 r|:57 5093 303 +23 多开 r|:58 5092 207 +36 空开 g`;
fill('ticks', TICKS.split('|').map((row, i) => {
  const [time, price, size, diff, kind, c] = row.split(' ');
  const cls = c === 'g' ? 'down' : 'up';
  return `<tr><td class="${i ? 'sec' : 'clock'}">${time}</td><td class="up">${price}</td><td class="${cls}">${size}</td><td class="amt">${diff}</td><td class="${cls}">${kind}</td></tr>`;
}));

// Toolbar colours showing in the window behind.
const PEEK = ['#8c2020', '#b9602a', '#ee6a1c', '#57a440', '#e0a030', '#e0a030', '#7a9a50', '#d04040', '#a05820', '#888', '#6aa0e0', '#ccc', '#888', '#c44', '#ee5a3c', '#cfa030', '#cfa030', '#cfa030', '#cfa030', '#cfa030', '#6aa860', '#6aa860', '#6aa860', '#6aa860', '#6aa860', '#6aa860', '#6aa860', '#6aa860', '#ee6a4c'];
for (const color of PEEK) {
  const dot = document.createElement('i');
  dot.style.background = color;
  document.getElementById('peek').appendChild(dot);
}
```
